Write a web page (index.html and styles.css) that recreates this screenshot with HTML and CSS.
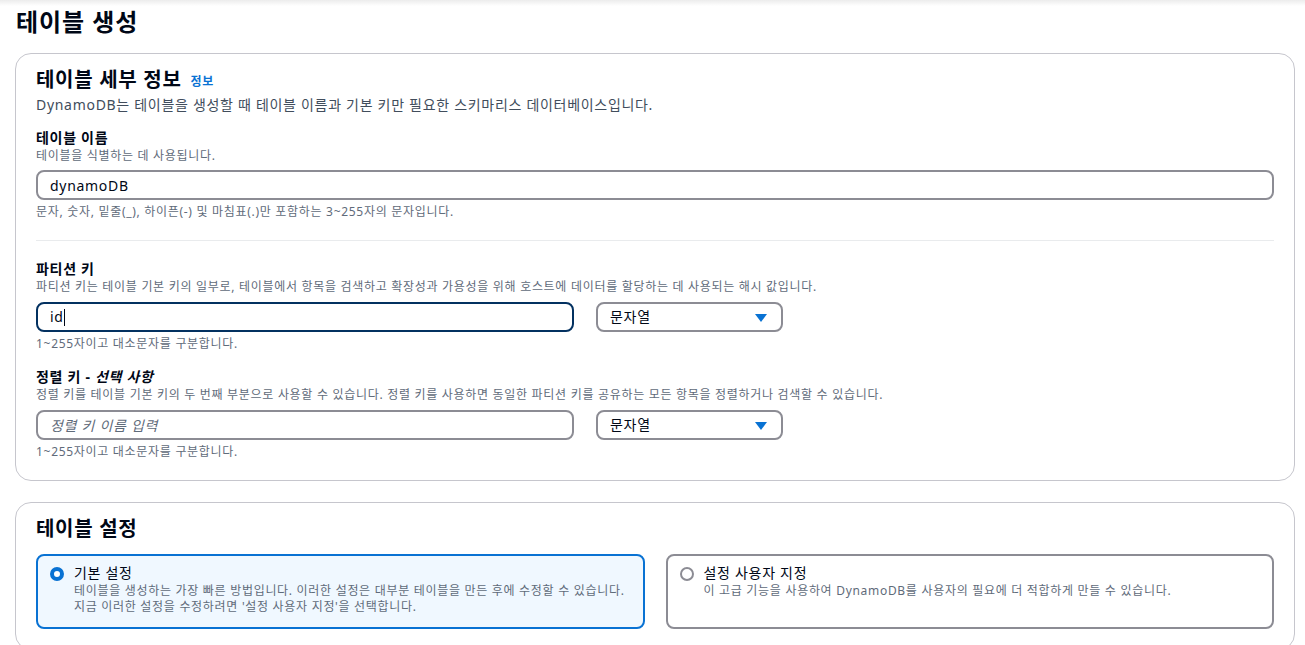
FILE: index.html
```html
<!DOCTYPE html>
<html lang="ko">
<head>
<meta charset="UTF-8" />
<meta name="viewport" content="width=device-width, initial-scale=1" />
<title>테이블 생성</title>
<link rel="stylesheet" href="styles.css">
</head>
<body>

<div class="top-shadow"></div>

<main class="page">
  <h1>테이블 생성</h1>

  <!-- 테이블 세부 정보 -->
  <section class="card">
    <h2>테이블 세부 정보 <a href="#" class="info">정보</a></h2>
    <p class="card-desc">DynamoDB는 테이블을 생성할 때 테이블 이름과 기본 키만 필요한 스키마리스 데이터베이스입니다.</p>

    <div class="field first">
      <label class="label">테이블 이름</label>
      <div class="desc">테이블을 식별하는 데 사용됩니다.</div>
      <input class="input full" type="text" value="dynamoDB" />
      <div class="hint">문자, 숫자, 밑줄(_), 하이픈(-) 및 마침표(.)만 포함하는 3~255자의 문자입니다.</div>
    </div>

    <hr class="divider" />

    <div class="field">
      <label class="label">파티션 키</label>
      <div class="desc">파티션 키는 테이블 기본 키의 일부로, 테이블에서 항목을 검색하고 확장성과 가용성을 위해 호스트에 데이터를 할당하는 데 사용되는 해시 값입니다.</div>
      <div class="row">
        <div class="input key focused">id<span class="caret"></span></div>
        <div class="select">문자열 <span class="arrow"></span></div>
      </div>
      <div class="hint">1~255자이고 대소문자를 구분합니다.</div>
    </div>

    <div class="field">
      <label class="label">정렬 키 - <i>선택 사항</i></label>
      <div class="desc">정렬 키를 테이블 기본 키의 두 번째 부분으로 사용할 수 있습니다. 정렬 키를 사용하면 동일한 파티션 키를 공유하는 모든 항목을 정렬하거나 검색할 수 있습니다.</div>
      <div class="row">
        <input class="input key" type="text" placeholder="정렬 키 이름 입력" />
        <div class="select">문자열 <span class="arrow"></span></div>
      </div>
      <div class="hint">1~255자이고 대소문자를 구분합니다.</div>
    </div>
  </section>

  <!-- 테이블 설정 -->
  <section class="card">
    <h2>테이블 설정</h2>
    <div class="tiles">
      <div class="tile selected">
        <span class="radio on"></span>
        <div>
          <div class="tile-title">기본 설정</div>
          <div class="tile-desc">테이블을 생성하는 가장 빠른 방법입니다. 이러한 설정은 대부분 테이블을 만든 후에 수정할 수 있습니다.<br>지금 이러한 설정을 수정하려면 '설정 사용자 지정'을 선택합니다.</div>
        </div>
      </div>
      <div class="tile">
        <span class="radio"></span>
        <div>
          <div class="tile-title">설정 사용자 지정</div>
          <div class="tile-desc">이 고급 기능을 사용하여 DynamoDB를 사용자의 필요에 더 적합하게 만들 수 있습니다.</div>
        </div>
      </div>
    </div>
  </section>
</main>

</body>
</html>
```

FILE: styles.css
```css
body {
  margin: 0;
  font-family: "Noto Sans", "Noto Sans CJK KR", sans-serif;
  color: #000716;
  background: #fff;
  font-size: 14px;
  line-height: 20px;
  letter-spacing: 0.05em;
}
.top-shadow {
  height: 6px;
  background: linear-gradient(#ececec, #fff);
}
.page {
  padding: 0 10px 0 15px;
}
h1 {
  margin: 0 0 15px 1px;
  font-size: 24px;
  line-height: 32px;
  font-weight: bold;
  letter-spacing: 0.04em;
}
.card {
  border: 1px solid #c6c6cd;
  border-radius: 16px;
  padding: 13px 20px 20px;
  margin-bottom: 21px;
}
.card h2 {
  margin: 0;
  font-size: 20px;
  line-height: 26px;
  font-weight: bold;
}
.info {
  color: #0972d3;
  font-size: 12px;
  font-weight: bold;
  text-decoration: none;
  margin-left: 3px;
  vertical-align: 1px;
}
.card-desc {
  margin: 0;
  color: #414d5c;
}
.field {
  margin-top: 15px;
}
.field.first {
  margin-top: 13px;
}
.label {
  display: block;
  font-weight: bold;
}
.desc, .hint {
  font-size: 12px;
  line-height: 16px;
  color: #5f6b7a;
}
.hint {
  margin-top: 4px;
}
.input {
  display: block;
  box-sizing: border-box;
  height: 30px;
  margin-top: 6px;
  padding: 0 12px;
  border: 2px solid #8c8c94;
  border-radius: 8px;
  font-family: inherit;
  font-size: 14px;
  line-height: 26px;
  letter-spacing: 0.05em;
  color: #000716;
  background: #fff;
  outline: none;
}
.input.full {
  width: 100%;
}
.input::placeholder {
  color: #5f6b7a;
  font-style: italic;
}
.row {
  display: flex;
  gap: 22px;
  margin-top: 7px;
}
.row .input {
  margin-top: 0;
}
.key {
  width: 538px;
}
.focused {
  border-color: #033160;
  position: relative;
}
.caret {
  display: inline-block;
  width: 1px;
  height: 17px;
  background: #000716;
  vertical-align: -4px;
  margin-left: 0;
}
.select {
  box-sizing: border-box;
  width: 187px;
  height: 30px;
  padding: 0 14px 0 12px;
  border: 2px solid #8c8c94;
  border-radius: 8px;
  line-height: 26px;
  display: flex;
  justify-content: space-between;
  align-items: center;
}
.arrow {
  width: 0;
  height: 0;
  border-left: 6px solid transparent;
  border-right: 6px solid transparent;
  border-top: 8px solid #0972d3;
  margin-top: 1px;
}
.divider {
  border: none;
  border-top: 1px solid #e9ebed;
  margin: 20px 0 0;
}
.divider + .field {
  margin-top: 18px;
}
/* 테이블 설정 */
.tiles {
  display: grid;
  grid-template-columns: 1fr 1fr;
  gap: 21px;
  margin-top: 12px;
}
.tile {
  box-sizing: border-box;
  height: 75px;
  border: 2px solid #8c8c94;
  border-radius: 8px;
  padding: 7px 12px 12px 12px;
  display: flex;
  gap: 10px;
}
.tile.selected {
  border-color: #0972d3;
  background: #f0f8ff;
}
.radio {
  box-sizing: border-box;
  flex: none;
  width: 14px;
  height: 14px;
  margin-top: 4px;
  border: 2px solid #8c8c94;
  border-radius: 50%;
  background: #fff;
}
.radio.on {
  border: 4px solid #0972d3;
}
.tile-desc {
  font-size: 12px;
  line-height: 16px;
  color: #5f6b7a;
}
```
